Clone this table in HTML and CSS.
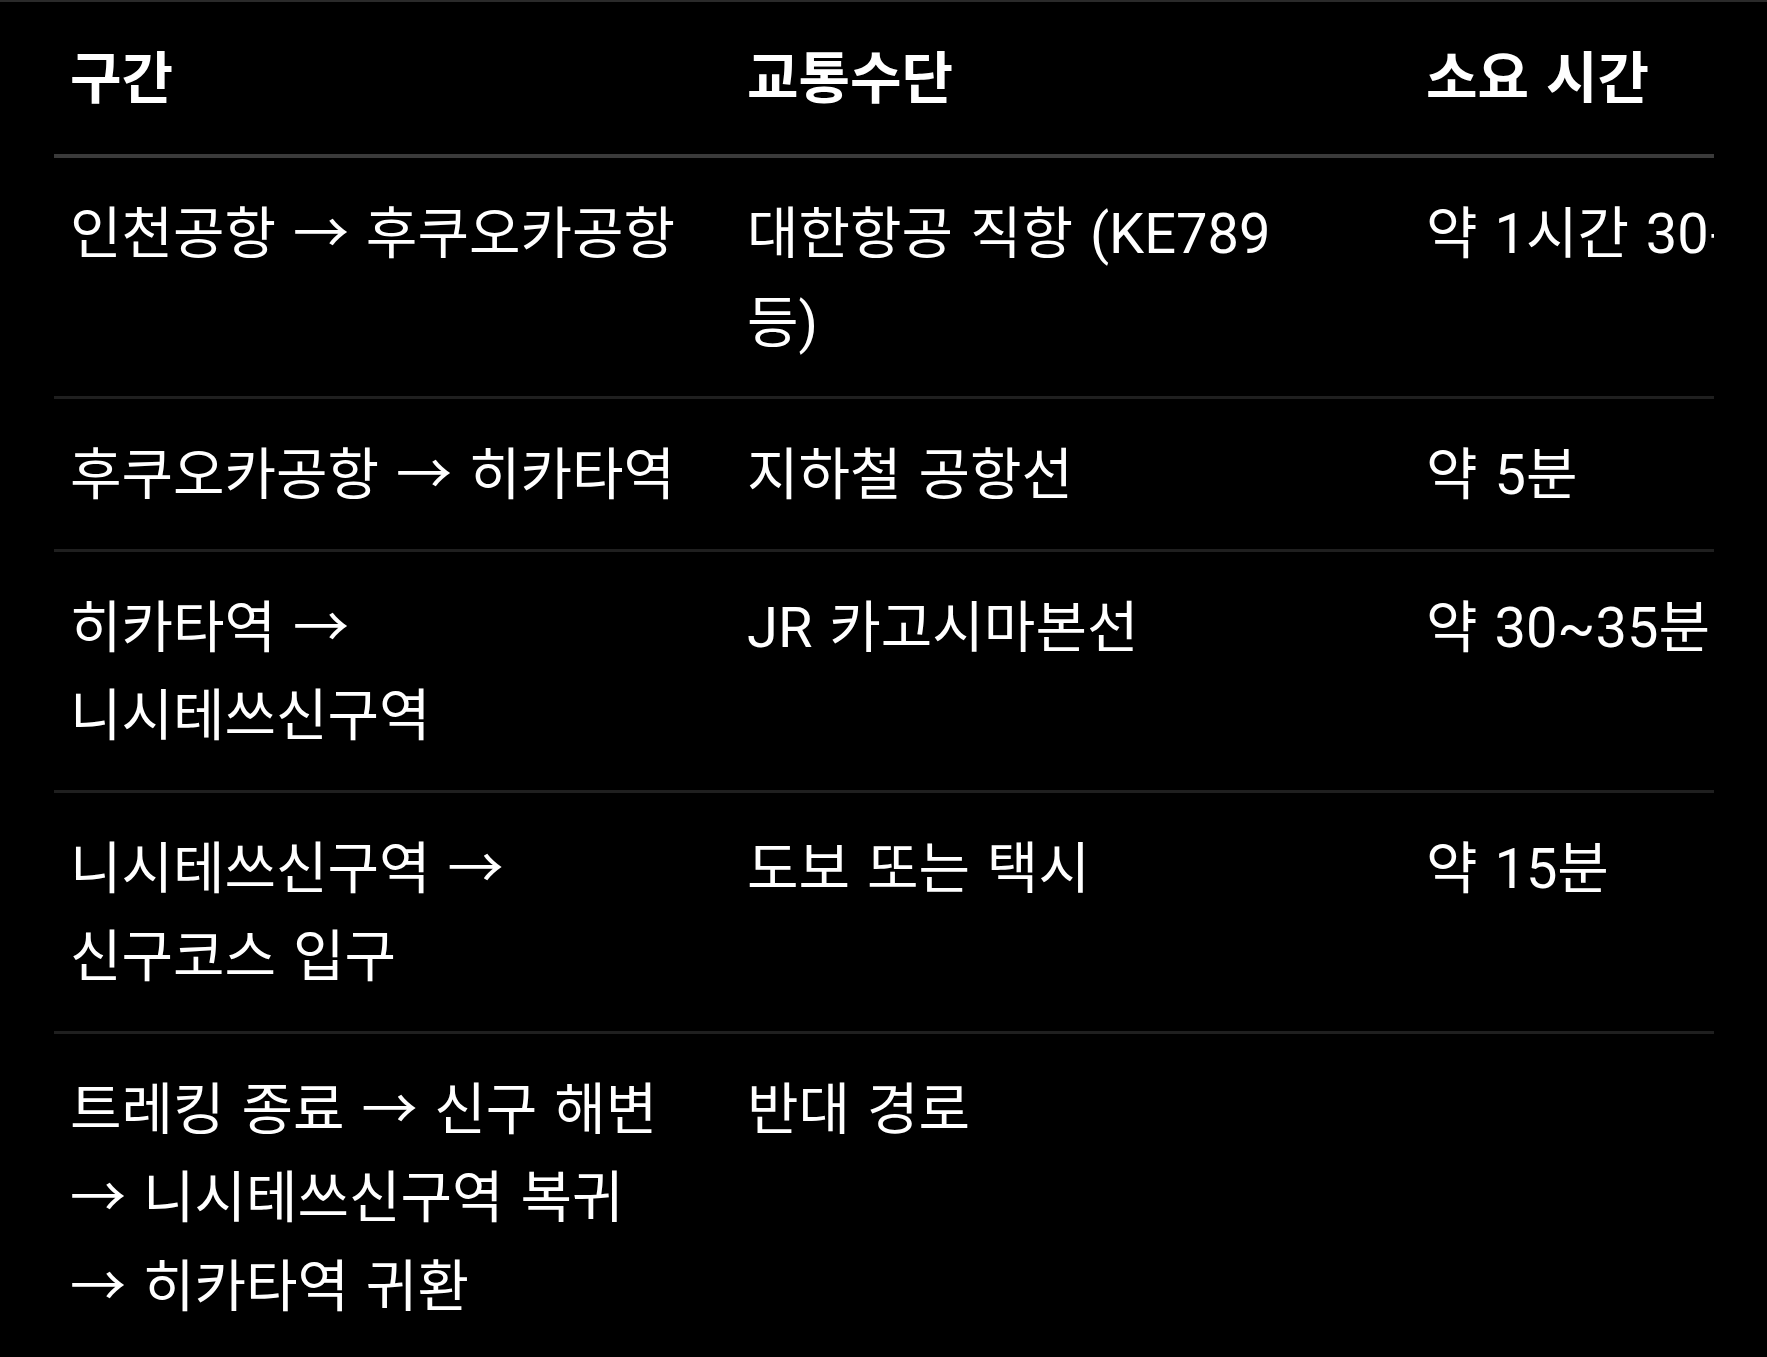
FILE: index.html
```html
<!DOCTYPE html>
<html lang="ko">
<head>
<meta charset="utf-8">
<title>교통 안내</title>
<link rel="stylesheet" href="styles.css">
</head>
<body>
<div class="top-rule"></div>
<div class="table-wrap">
  <table class="route-table">
    <colgroup>
      <col class="c1"><col class="c2"><col class="c3">
    </colgroup>
    <thead>
      <tr><th>구간</th><th>교통수단</th><th>소요 시간</th></tr>
    </thead>
    <tbody>
      <tr><td>인천공항 → 후쿠오카공항</td><td class="mode">대한항공 직항 (KE789 등)</td><td class="time">약 1시간 30분</td></tr>
      <tr><td>후쿠오카공항 → 히카타역</td><td class="mode">지하철 공항선</td><td class="time">약 5분</td></tr>
      <tr><td>히카타역 → 니시테쓰신구역</td><td class="mode">JR 카고시마본선</td><td class="time">약 30~35분</td></tr>
      <tr><td>니시테쓰신구역 → 신구코스 입구</td><td class="mode">도보 또는 택시</td><td class="time">약 15분</td></tr>
      <tr><td>트레킹 종료 → 신구 해변 → 니시테쓰신구역 복귀 → 히카타역 귀환</td><td class="mode">반대 경로</td><td class="time"></td></tr>
    </tbody>
  </table>
</div>
</body>
</html>
```

FILE: styles.css
```css
html, body {
  margin: 0;
  padding: 0;
  background: #000;
}

body {
  color: #fff;
  font-family: Roboto, "Noto Sans CJK KR", sans-serif;
  font-size: 56px;
}

.top-rule {
  height: 2px;
  background: #2a2a2a;
}

.table-wrap {
  margin-left: 54px;
  width: 1660px;
  overflow-x: auto;
  scrollbar-width: none;
}

.route-table {
  border-collapse: collapse;
  table-layout: fixed;
  width: 1736px;
}

.c1 { width: 677px; }
.c2 { width: 679px; }
.c3 { width: 380px; }

.route-table th,
.route-table td {
  text-align: left;
  vertical-align: top;
  line-height: 88.5px;
  padding: 32px 48px 29px 16px;
  word-break: keep-all;
  word-spacing: 3px;
}

.route-table th {
  font-weight: 700;
  padding-top: 33px;
  padding-bottom: 30.5px;
  border-bottom: 4px solid #3a3a3a;
}

.route-table td {
  font-weight: 400;
  border-bottom: 3px solid #1f1f1f;
}

.route-table td.mode {
  padding-right: 80px;
}

.route-table td.time {
  white-space: nowrap;
}
```
